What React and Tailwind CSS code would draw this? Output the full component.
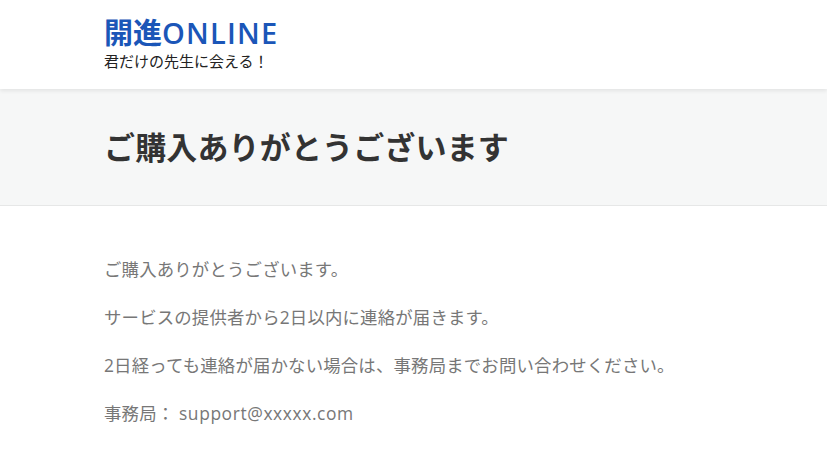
export default function App() {
    const lines = [
        'ご購入ありがとうございます。',
        'サービスの提供者から2日以内に連絡が届きます。',
        '2日経っても連絡が届かない場合は、事務局までお問い合わせください。',
        <>事務局： <span className="tracking-[0.6px]">support@xxxxx.com</span></>,
    ];

    return (
        <div className="min-h-screen bg-white font-['Noto_Sans_CJK_JP',sans-serif]">
            {/* Header */}
            <header className="relative z-10 h-[89px] bg-white shadow-[0_2px_4px_rgba(0,0,0,0.08)]">
                <div className="pl-[104px] pt-[13px]">
                    <div className="text-[29px] leading-[37px] font-bold text-[#1b56b8]">
                        開進<span className="font-['Open_Sans',sans-serif] font-semibold tracking-[1.2px]">ONLINE</span>
                    </div>
                    <div className="text-[15px] leading-[20px] text-[#222]">君だけの先生に会える！</div>
                </div>
            </header>

            {/* Title band */}
            <div className="h-[117px] bg-[#f6f7f7] border-b border-[#e6e7e7] flex items-center pl-[104px] pb-[4px]">
                <h1 className="text-[31px] font-bold text-[#333] leading-none tracking-[0.15px]">
                    ご購入ありがとうございます
                </h1>
            </div>

            {/* Body */}
            <main className="pl-[104px] pt-[50px] flex flex-col gap-[22px] font-['Open_Sans','Noto_Sans_CJK_JP',sans-serif] text-[17.4px] leading-[26px] tracking-[0.18px] text-[#777]">
                {lines.map((l, i) => (
                    <p key={i}>{l}</p>
                ))}
            </main>
        </div>
    );
}
